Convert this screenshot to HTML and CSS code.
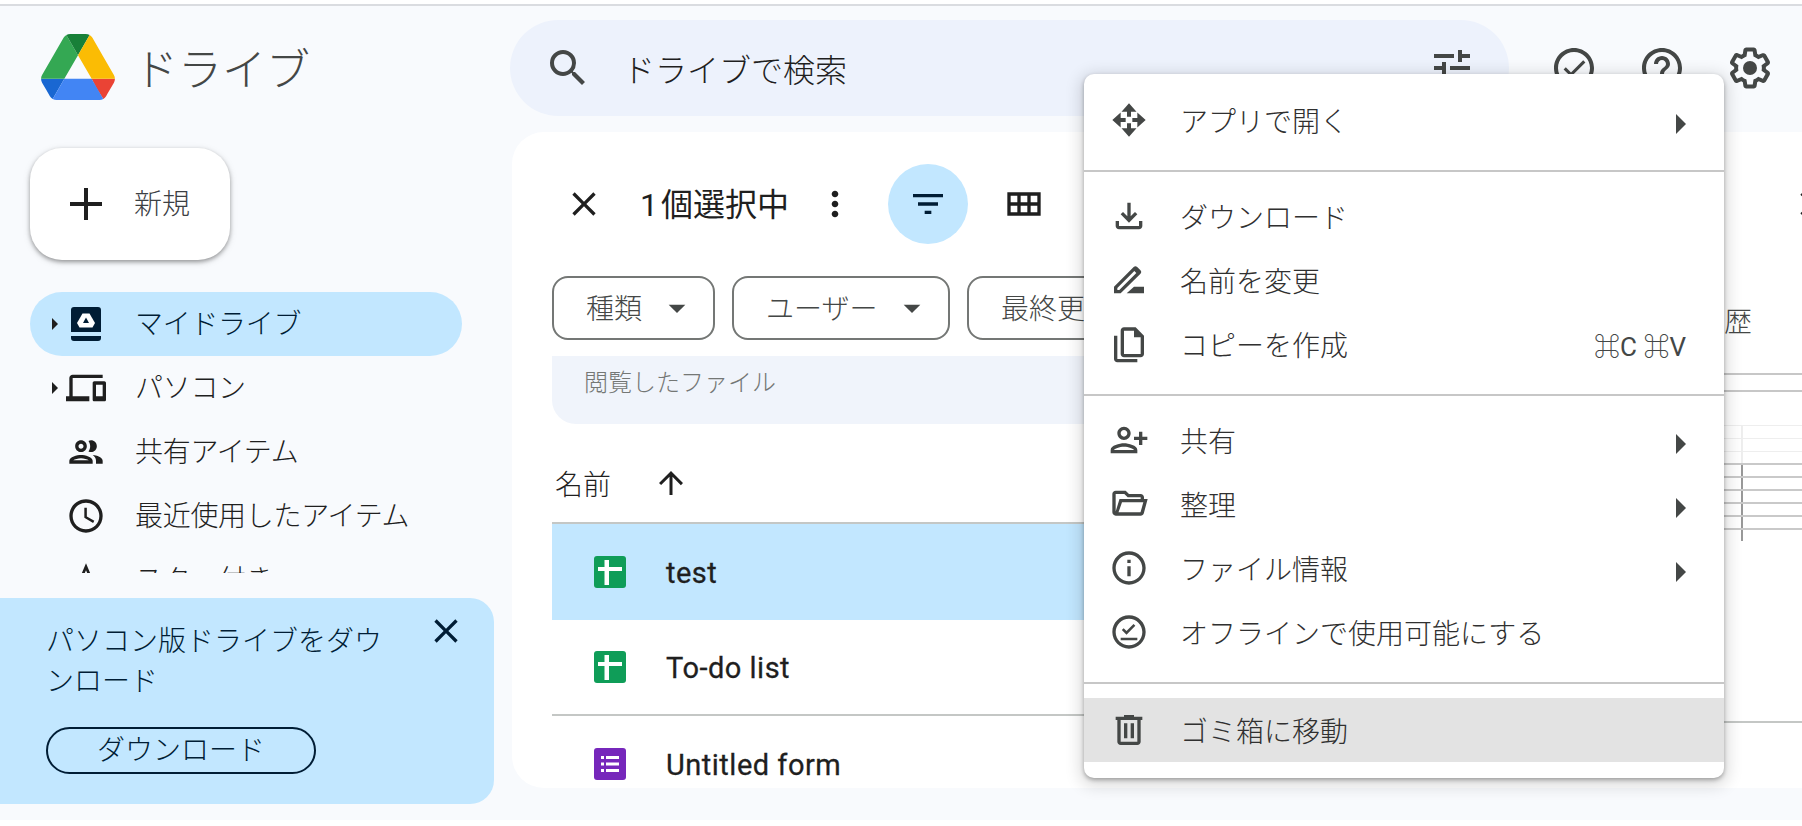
FILE: index.html
```html
<html>
  <head>
    <meta charset="UTF-8" />
    <meta name="viewport" content="width=device-width, initial-scale=1.0" />
    <link rel="stylesheet" href="styles.css">
  </head>
  <body>
    <div class="app">
      <!-- left column -->
      <aside class="sidebar">
        <div class="brand">
          <svg class="logo" viewBox="0 0 87.3 78">
            <path d="m6.6 66.85 3.85 6.65c.8 1.4 1.95 2.5 3.3 3.3l13.75-23.8h-27.5c0 1.55.4 3.1 1.2 4.5z" fill="#1967d2"/>
            <path d="m43.65 25-13.75-23.8c-1.35.8-2.5 1.9-3.3 3.3l-25.4 44a9.06 9.06 0 0 0 -1.2 4.5h27.5z" fill="#34a853"/>
            <path d="m73.55 76.8c1.35-.8 2.5-1.9 3.3-3.3l1.6-2.75 7.65-13.25c.8-1.4 1.2-2.95 1.2-4.5h-27.502l5.852 11.5z" fill="#ea4335"/>
            <path d="m43.65 25 13.75-23.8c-1.35-.8-2.9-1.2-4.5-1.2h-18.5c-1.6 0-3.15.45-4.5 1.2z" fill="#188038"/>
            <path d="m59.8 53h-32.3l-13.75 23.8c1.35.8 2.9 1.2 4.5 1.2h50.8c1.6 0 3.15-.45 4.5-1.2z" fill="#4285f4"/>
            <path d="m73.4 26.5-12.7-22c-.8-1.4-1.95-2.5-3.3-3.3l-13.75 23.8 16.15 28h27.45c0-1.55-.4-3.1-1.2-4.5z" fill="#fbbc04"/>
          </svg>
          <span class="brand-name">ドライブ</span>
        </div>

        <button class="new-btn" type="button">
          <svg class="ic48" viewBox="0 0 24 24"><path d="M20 13h-7v7h-2v-7H4v-2h7V4h2v7h7v2z"/></svg>
          <span>新規</span>
        </button>

        <nav class="nav">
          <div class="nav-item active">
            <span class="caret"></span>
            <svg class="ic40" viewBox="0 0 40 40">
              <path d="M8 3h24a3 3 0 0 1 3 3v22H5V6a3 3 0 0 1 3-3zM5 32h30v2a3 3 0 0 1-3 3H8a3 3 0 0 1-3-3z"/>
              <path d="M16.5 9.5h7l5.5 9.5-2.5 4.5h-13L11 19z" fill="#fff"/>
              <path d="M20 13.5l3 5.5h-6z"/>
            </svg>
            <span class="nav-label">マイドライブ</span>
          </div>
          <div class="nav-item">
            <span class="caret"></span>
            <svg class="ic40" viewBox="0 0 24 24"><path d="M4 6h18V4H4c-1.1 0-2 .9-2 2v11H0v3h14v-3H4V6zm19 2h-6c-.55 0-1 .45-1 1v10c0 .55.45 1 1 1h6c.55 0 1-.45 1-1V9c0-.55-.45-1-1-1zm-1 9h-4v-7h4v7z"/></svg>
            <span class="nav-label">パソコン</span>
          </div>
          <div class="nav-item">
            <span class="caret none"></span>
            <svg class="ic40" viewBox="0 0 24 24"><path d="M9 13.75c-2.34 0-7 1.17-7 3.5V19h14v-1.75c0-2.33-4.66-3.5-7-3.5zM4.34 17c.84-.58 2.87-1.25 4.66-1.25s3.82.67 4.66 1.25H4.34zM9 12c1.93 0 3.5-1.57 3.5-3.5S10.93 5 9 5 5.5 6.57 5.5 8.5 7.07 12 9 12zm0-5c.83 0 1.5.67 1.5 1.5S9.83 10 9 10s-1.5-.67-1.5-1.5S8.17 7 9 7zm7.04 6.81c1.16.84 1.96 1.96 1.96 3.44V19h4v-1.75c0-2.02-3.5-3.17-5.96-3.44zM15 12c1.93 0 3.5-1.57 3.5-3.5S16.93 5 15 5c-.54 0-1.04.13-1.5.35.63.89 1 1.98 1 3.15s-.37 2.26-1 3.15c.46.22.96.35 1.5.35z"/></svg>
            <span class="nav-label">共有アイテム</span>
          </div>
          <div class="nav-item">
            <span class="caret none"></span>
            <svg class="ic40" viewBox="0 0 24 24"><path d="M11.99 2C6.47 2 2 6.48 2 12s4.47 10 9.99 10C17.52 22 22 17.52 22 12S17.52 2 11.99 2zM12 20c-4.42 0-8-3.58-8-8s3.58-8 8-8 8 3.58 8 8-3.58 8-8 8zm.5-13H11v6l5.25 3.15.75-1.23-4.5-2.67z"/></svg>
            <span class="nav-label">最近使用したアイテム</span>
          </div>
          <div class="nav-item">
            <span class="caret none"></span>
            <svg class="ic40" viewBox="0 0 24 24"><path d="M22 9.24l-7.19-.62L12 2 9.19 8.63 2 9.24l5.46 4.73L5.82 21 12 17.27 18.18 21l-1.63-7.03L22 9.24zM12 15.4l-3.76 2.27 1-4.28-3.32-2.88 4.38-.38L12 6.1l1.71 4.04 4.38.38-3.32 2.88 1 4.28L12 15.4z"/></svg>
            <span class="nav-label">スター付き</span>
          </div>
        </nav>

        <div class="promo">
          <div class="promo-top">
            <p class="promo-text">パソコン版ドライブをダウンロード</p>
            <svg class="ic40 promo-close" viewBox="0 0 24 24"><path d="M19 6.41L17.59 5 12 10.59 6.41 5 5 6.41 10.59 12 5 17.59 6.41 19 12 13.41 17.59 19 19 17.59 13.41 12z"/></svg>
          </div>
          <button class="promo-btn" type="button">ダウンロード</button>
        </div>
      </aside>

      <!-- right column -->
      <div class="content">
        <header class="topbar">
          <div class="search">
            <svg class="ic48" viewBox="0 0 24 24"><path d="M15.5 14h-.79l-.28-.27A6.471 6.471 0 0 0 16 9.5 6.5 6.5 0 1 0 9.5 16c1.61 0 3.09-.59 4.23-1.57l.27.28v.79l5 4.99L20.49 19l-4.99-5zm-6 0C7.01 14 5 11.99 5 9.5S7.01 5 9.5 5 14 7.01 14 9.5 11.99 14 9.5 14z"/></svg>
            <span class="search-text">ドライブで検索</span>
            <svg class="ic48" viewBox="0 0 24 24"><path d="M3 17v2h6v-2H3zM3 5v2h10V5H3zm10 16v-2h8v-2h-8v-2h-2v6h2zM7 9v2H3v2h4v2h2V9H7zm14 4v-2H11v2h10zm-6-4h2V7h4V5h-4V3h-2v6z"/></svg>
          </div>
          <div class="top-icons">
            <svg class="ic48" viewBox="0 0 24 24"><path d="M12 2C6.48 2 2 6.48 2 12s4.48 10 10 10 10-4.48 10-10S17.52 2 12 2zm0 18c-4.41 0-8-3.59-8-8s3.59-8 8-8 8 3.59 8 8-3.59 8-8 8zM16.6 8.1l-6.1 6.1-2.6-2.6-1.1 1.1 3.7 3.7 7.2-7.2z"/></svg>
            <svg class="ic48" viewBox="0 0 24 24"><path d="M11 18h2v-2h-2v2zm1-16C6.48 2 2 6.48 2 12s4.48 10 10 10 10-4.48 10-10S17.52 2 12 2zm0 18c-4.41 0-8-3.59-8-8s3.59-8 8-8 8 3.59 8 8-3.59 8-8 8zm0-14c-2.21 0-4 1.79-4 4h2c0-1.1.9-2 2-2s2 .9 2 2c0 2-3 1.75-3 5h2c0-2.25 3-2.5 3-5 0-2.21-1.79-4-4-4z"/></svg>
            <svg class="ic48" viewBox="0 0 24 24"><path d="M13.85 22.25h-3.7c-.74 0-1.36-.54-1.45-1.27l-.27-1.89c-.27-.14-.53-.29-.79-.46l-1.8.72c-.7.26-1.47-.03-1.81-.65L2.2 15.53c-.35-.66-.2-1.44.36-1.88l1.53-1.19c-.01-.15-.02-.3-.02-.46 0-.15.01-.31.02-.46l-1.52-1.19c-.59-.45-.74-1.26-.37-1.88l1.85-3.19c.34-.62 1.11-.9 1.79-.63l1.81.73c.26-.17.52-.32.78-.46l.27-1.91c.09-.7.71-1.25 1.44-1.25h3.7c.74 0 1.36.54 1.45 1.27l.27 1.89c.27.14.53.29.79.46l1.8-.72c.71-.26 1.48.03 1.82.65l1.84 3.18c.36.66.2 1.44-.36 1.88l-1.52 1.19c.01.15.02.3.02.46s-.01.31-.02.46l1.52 1.19c.56.45.72 1.23.37 1.86l-1.86 3.22c-.34.62-1.11.9-1.8.63l-1.8-.72c-.26.17-.52.32-.78.46l-.27 1.91c-.1.68-.72 1.22-1.46 1.22zm-3.23-2h2.76l.37-2.55.53-.22c.44-.18.88-.44 1.34-.78l.45-.34 2.38.96 1.38-2.4-2.03-1.58.07-.56c.03-.26.06-.51.06-.78s-.03-.53-.06-.78l-.07-.56 2.03-1.58-1.39-2.4-2.39.96-.45-.35c-.42-.32-.87-.58-1.33-.77l-.52-.22-.37-2.55h-2.76l-.37 2.55-.53.21c-.44.19-.88.44-1.34.79l-.45.33-2.38-.95-1.39 2.39 2.03 1.58-.07.56a7 7 0 0 0-.06.79c0 .26.02.53.06.78l.07.56-2.03 1.58 1.38 2.4 2.39-.96.45.35c.43.33.86.58 1.33.77l.53.22.38 2.55z"/><circle cx="12" cy="12" r="3.5"/></svg>
          </div>
        </header>

        <main class="panel">
          <section class="files">
            <div class="toolbar">
              <svg class="ic40" viewBox="0 0 24 24"><path d="M19 6.41L17.59 5 12 10.59 6.41 5 5 6.41 10.59 12 5 17.59 6.41 19 12 13.41 17.59 19 19 17.59 13.41 12z"/></svg>
              <span class="count">1 個選択中</span>
              <svg class="ic40 more" viewBox="0 0 24 24"><path d="M12 8c1.1 0 2-.9 2-2s-.9-2-2-2-2 .9-2 2 .9 2 2 2zm0 2c-1.1 0-2 .9-2 2s.9 2 2 2 2-.9 2-2-.9-2-2-2zm0 6c-1.1 0-2 .9-2 2s.9 2 2 2 2-.9 2-2-.9-2-2-2z"/></svg>
              <div class="filter-btn">
                <svg class="ic40" viewBox="0 0 24 24"><path d="M10 18h4v-2h-4v2zM3 6v2h18V6H3zm3 7h12v-2H6v2z"/></svg>
              </div>
              <svg class="ic40 grid-btn" viewBox="0 0 24 24"><path d="M2 5v14h20V5H2zm6 12H4v-4h4v4zm0-6H4V7h4v4zm6 6h-4v-4h4v4zm0-6h-4V7h4v4zm6 6h-4v-4h4v4zm0-6h-4V7h4v4z"/></svg>
            </div>

            <div class="chips">
              <div class="chip chip-type"><span class="chip-label">種類</span><svg class="ic40" viewBox="0 0 24 24"><path d="M7 10l5 5 5-5z"/></svg></div>
              <div class="chip chip-user"><span class="chip-label">ユーザー</span><svg class="ic40" viewBox="0 0 24 24"><path d="M7 10l5 5 5-5z"/></svg></div>
              <div class="chip chip-date"><span class="chip-label">最終更新</span><svg class="ic40" viewBox="0 0 24 24"><path d="M7 10l5 5 5-5z"/></svg></div>
            </div>

            <div class="banner">閲覧したファイル</div>

            <div class="list-head">
              <span>名前</span>
              <svg class="ic36" viewBox="0 0 24 24"><path d="M4 12l1.41 1.41L11 7.83V20h2V7.83l5.58 5.59L20 12l-8-8-8 8z"/></svg>
            </div>

            <div class="file selected">
              <svg class="file-icon" viewBox="0 0 32 32"><rect width="32" height="32" rx="3" fill="#0f9d58"/><path d="M10.5 4H15v7h13v4H15v14h-4.5V15H4v-4h6.5z" fill="#fff"/></svg>
              <span>test</span>
            </div>
            <div class="file ruled">
              <svg class="file-icon" viewBox="0 0 32 32"><rect width="32" height="32" rx="3" fill="#0f9d58"/><path d="M10.5 4H15v7h13v4H15v14h-4.5V15H4v-4h6.5z" fill="#fff"/></svg>
              <span>To-do list</span>
            </div>
            <div class="file">
              <svg class="file-icon" viewBox="0 0 32 32"><rect width="32" height="32" rx="3" fill="#7627bb"/><path d="M7 8h3v3H7zM12 8h13v3H12zM7 14.5h3v3H7zM12 14.5h13v3H12zM7 21h3v3H7zM12 21h13v3H12z" fill="#fff"/></svg>
              <span>Untitled form</span>
            </div>
          </section>

          <!-- details pane, mostly behind the menu -->
          <section class="details">
            <svg class="ic40 details-close" viewBox="0 0 24 24"><path d="M19 6.41L17.59 5 12 10.59 6.41 5 5 6.41 10.59 12 5 17.59 6.41 19 12 13.41 17.59 19 19 17.59 13.41 12z"/></svg>
            <div class="tabs"><span>履歴</span></div>
            <div class="preview-rule"></div>
            <div class="preview">
              <div class="sheet-faint"></div>
              <div class="sheet-dark"></div>
            </div>
            <div class="details-rule"></div>
          </section>
        </main>
      </div>
    </div>

    <div class="menu">
      <div class="menu-item">
        <svg class="ic40" viewBox="0 0 24 24">
          <path d="M12 2l4.5 5h-3.3v3h-2.4V7H7.500z"/>
          <path d="M12 2l4.5 5h-3.3v3h-2.4V7H7.500z" transform="rotate(90 12 12)"/>
          <path d="M12 2l4.5 5h-3.3v3h-2.4V7H7.500z" transform="rotate(180 12 12)"/>
          <path d="M12 2l4.5 5h-3.3v3h-2.4V7H7.500z" transform="rotate(270 12 12)"/>
        </svg>
        <span class="menu-label">アプリで開く</span>
        <i class="sub"></i>
      </div>
      <div class="menu-rule"></div>
      <div class="menu-item">
        <svg class="ic40" viewBox="0 0 24 24"><path d="M18 15v3H6v-3H4v3c0 1.1.9 2 2 2h12c1.1 0 2-.9 2-2v-3h-2zm-1-4l-1.41-1.41L13 12.17V4h-2v8.17L8.41 9.59 7 11l5 5 5-5z"/></svg>
        <span class="menu-label">ダウンロード</span>
      </div>
      <div class="menu-item">
        <svg class="ic40" viewBox="0 0 24 24"><path fill-rule="evenodd" d="M3 20v-4L14.8 4.2a1.5 1.5 0 0 1 2.1 0l2 2a1.5 1.5 0 0 1 0 2.1L7 20zM5 18h1.2L16.4 7.8 15.2 6.6 5 16.8z"/><path d="M10.6 20l4.4-4h6v4z"/></svg>
        <span class="menu-label">名前を変更</span>
      </div>
      <div class="menu-item">
        <svg class="ic40" viewBox="0 0 24 24"><path fill-rule="evenodd" d="M9 2h7l5 5v11c0 1.1-.9 2-2 2H9c-1.1 0-2-.9-2-2V4c0-1.1.9-2 2-2zm0 2v14h10V8h-4V4H9z"/><path d="M3 7h2v14h12v2H5c-1.1 0-2-.9-2-2V7z"/></svg>
        <span class="menu-label">コピーを作成</span>
        <span class="shortcut">⌘C ⌘V</span>
      </div>
      <div class="menu-rule"></div>
      <div class="menu-item">
        <svg class="ic40" viewBox="0 0 24 24"><path transform="matrix(-1 0 0 1 24 0)" d="M15 12c2.21 0 4-1.79 4-4s-1.79-4-4-4-4 1.79-4 4 1.79 4 4 4zm0-6c1.1 0 2 .9 2 2s-.9 2-2 2-2-.9-2-2 .9-2 2-2zm0 8c-2.67 0-8 1.34-8 4v2h16v-2c0-2.66-5.33-4-8-4zm-6 4c.22-.72 3.31-2 6-2 2.7 0 5.8 1.29 6 2H9zm-3-3v-3h3v-2H6V7H4v3H1v2h3v3h2z"/></svg>
        <span class="menu-label">共有</span>
        <i class="sub"></i>
      </div>
      <div class="menu-item">
        <svg class="ic40" viewBox="0 0 24 24"><path fill-rule="evenodd" d="M4 4h6l2 2h7c1.1 0 2 .9 2 2v1h2.2l-2.3 8.5c-.23.87-1.01 1.5-1.93 1.5H4c-1.1 0-2-.9-2-2V6c0-1.1.9-2 2-2zm0 2v10.5L6.3 9H19V8h-7.800l-2-2H4zm3.800 5l-2.100 6h13.200l1.700-6H7.800z"/></svg>
        <span class="menu-label">整理</span>
        <i class="sub"></i>
      </div>
      <div class="menu-item">
        <svg class="ic40" viewBox="0 0 24 24"><path d="M11 7h2v2h-2zm0 4h2v6h-2zm1-9C6.48 2 2 6.48 2 12s4.48 10 10 10 10-4.48 10-10S17.52 2 12 2zm0 18c-4.41 0-8-3.59-8-8s3.59-8 8-8 8 3.59 8 8-3.59 8-8 8z"/></svg>
        <span class="menu-label">ファイル情報</span>
        <i class="sub"></i>
      </div>
      <div class="menu-item">
        <svg class="ic40" viewBox="0 0 24 24"><path d="M12 2C6.48 2 2 6.48 2 12s4.48 10 10 10 10-4.48 10-10S17.52 2 12 2zm0 18c-4.41 0-8-3.59-8-8s3.59-8 8-8 8 3.59 8 8-3.59 8-8 8zM7 15.500h10V17H7zM10.500 13.600L7.700 10.800l1.100-1.100 1.700 1.700 4.200-4.200 1.100 1.100z"/></svg>
        <span class="menu-label">オフラインで使用可能にする</span>
      </div>
      <div class="menu-rule last"></div>
      <div class="menu-item hover">
        <svg class="ic40" viewBox="0 0 24 24"><path d="M15 4V3H9v1H4v2h1v13c0 1.1.9 2 2 2h10c1.1 0 2-.9 2-2V6h1V4h-5zm2 15H7V6h10v13zM9 8h2v9H9zm4 0h2v9h-2z"/></svg>
        <span class="menu-label">ゴミ箱に移動</span>
      </div>
    </div>
  </body>
</html>
```

FILE: styles.css
```css
html,
body {
  margin: 0;
}

body {
  width: 1802px;
  height: 826px;
  overflow: hidden;
  position: relative;
  background-color: #fff;
  color: #1f1f1f;
  font-family: Roboto, "Noto Sans CJK JP", sans-serif;
  font-size: 28px;
  font-weight: 300;
}

svg {
  display: block;
  flex-shrink: 0;
  fill: currentColor;
}

button {
  font: inherit;
  color: inherit;
  cursor: pointer;
}

.ic48 {
  width: 48px;
  height: 48px;
}

.ic40 {
  width: 40px;
  height: 40px;
}

.ic36 {
  width: 36px;
  height: 36px;
}

.app {
  display: flex;
  height: 814px;
  margin-top: 4px;
  background-color: #f8fafd;
  border-top: 2px solid #dadce0;
  overflow: hidden;
}

/* sidebar */
.sidebar {
  width: 510px;
  flex-shrink: 0;
  display: flex;
  flex-direction: column;
}

.brand {
  display: flex;
  align-items: center;
  height: 66px;
  margin: 28px 0 0 41px;
}

.logo {
  width: 74px;
  height: 66px;
}

.brand-name {
  margin-left: 19px;
  font-size: 44px;
  color: #444746;
}

.new-btn {
  display: flex;
  align-items: center;
  width: 200px;
  height: 112px;
  margin: 48px 0 0 30px;
  padding: 0 0 0 32px;
  border: 0;
  border-radius: 32px;
  background-color: #fff;
  box-shadow: 0 2px 4px rgba(0, 0, 0, 0.35), 0 2px 8px rgba(0, 0, 0, 0.1);
  color: #1f1f1f;
}

.new-btn span {
  margin-left: 24px;
  padding-bottom: 4px;
  color: #3c4043;
}

.nav {
  height: 281px;
  margin: 32px 0 0 30px;
  overflow: hidden;
}

.nav-item {
  display: flex;
  align-items: center;
  width: 432px;
  height: 64px;
  border-radius: 32px;
}

.nav-item.active {
  background-color: #c2e7ff;
  color: #001d35;
}

.caret {
  width: 0;
  height: 0;
  margin: 0 8px 0 22px;
  border-left: 6px solid #1f1f1f;
  border-top: 6px solid transparent;
  border-bottom: 6px solid transparent;
}

.caret.none {
  border-left-color: transparent;
}

.nav-label {
  margin-left: 29px;
  padding-bottom: 4px;
  letter-spacing: -0.3px;
}

.promo {
  width: 494px;
  height: 206px;
  box-sizing: border-box;
  margin-top: 25px;
  padding: 20px 0 0 46px;
  background-color: #c2e7ff;
  border-radius: 0 24px 24px 0;
  color: #001d35;
}

.promo-top {
  display: flex;
  align-items: flex-start;
  height: 109px;
}

.promo-text {
  width: 340px;
  margin: 0;
  padding-top: 4px;
  line-height: 40px;
}

.promo-close {
  margin: -7px 0 0 40px;
}

.promo-btn {
  display: block;
  width: 270px;
  height: 47px;
  padding: 0;
  border: 2px solid #001d35;
  border-radius: 24px;
  background: transparent;
  color: #001d35;
  line-height: 40px;
}

/* top bar */
.content {
  flex: 1;
  min-width: 0;
  display: flex;
  flex-direction: column;
}

.topbar {
  display: flex;
  align-items: center;
  height: 96px;
  padding: 14px 0 16px;
  color: #444746;
}

.search {
  display: flex;
  align-items: center;
  width: 999px;
  height: 96px;
  box-sizing: border-box;
  padding: 0 33px 0 34px;
  border-radius: 48px;
  background-color: #edf2fc;
}

.search-text {
  margin-left: 31px;
  flex: 1;
  font-size: 32px;
  color: #1f1f1f;
}

.top-icons {
  display: flex;
  gap: 40px;
  margin-left: 41px;
}

/* main panel */
.panel {
  flex: 1;
  display: flex;
  min-height: 0;
  margin: 0 0 32px 2px;
  overflow: hidden;
  background-color: #fff;
  border-radius: 32px 0 0 32px;
}

.files {
  width: 948px;
  flex-shrink: 0;
  padding-left: 40px;
}

.toolbar {
  display: flex;
  align-items: center;
  height: 80px;
  padding: 32px 0 0 12px;
}

.count {
  margin-left: 36px;
  padding-bottom: 4px;
  font-size: 32px;
  font-weight: 400;
  word-spacing: -5px;
  white-space: nowrap;
}

.more {
  margin-left: 26px;
}

.filter-btn {
  display: flex;
  align-items: center;
  justify-content: center;
  width: 80px;
  height: 80px;
  margin-left: 33px;
  border-radius: 50%;
  background-color: #c2e7ff;
  color: #001d35;
}

.grid-btn {
  margin-left: 36px;
}

.chips {
  display: flex;
  gap: 17px;
  margin-top: 32px;
}

.chip {
  display: flex;
  align-items: center;
  height: 64px;
  box-sizing: border-box;
  padding-left: 32px;
  border: 2px solid #747775;
  border-radius: 16px;
  color: #444746;
  white-space: nowrap;
}

.chip-label {
  padding-bottom: 2px;
}

.chip svg {
  margin-left: 15px;
}

.chip-type {
  width: 163px;
}

.chip-user {
  width: 218px;
}

.chip-date {
  width: 240px;
}

.banner {
  height: 68px;
  box-sizing: border-box;
  margin-top: 16px;
  padding: 9px 0 0 32px;
  border-radius: 0 0 24px 24px;
  background-color: #f0f4fb;
  font-size: 24px;
  line-height: 36px;
  color: #747775;
}

.list-head {
  display: flex;
  align-items: center;
  height: 98px;
  box-sizing: border-box;
  padding: 20px 0 0 3px;
}

.list-head svg {
  margin-left: 42px;
}

.file {
  display: flex;
  align-items: center;
  height: 96px;
  box-sizing: border-box;
  padding-left: 42px;
  font-size: 29px;
  font-weight: 400;
  letter-spacing: 0.5px;
  -webkit-text-stroke: 0.3px #1f1f1f;
  color: #1f1f1f;
}

.file span {
  padding-top: 2px;
}

.file.selected {
  height: 98px;
  border-top: 2px solid #c4c7c5;
  background-color: #c2e7ff;
}

.file.ruled {
  border-bottom: 2px solid #c4c7c5;
}

.file-icon {
  width: 32px;
  height: 32px;
  margin-right: 40px;
}

/* details pane */
.details {
  flex: 1;
  min-width: 0;
  overflow: hidden;
  padding-top: 52px;
}

.details-close {
  margin-left: 292px;
}

.tabs {
  height: 70px;
  margin-top: 79px;
  padding-left: 196px;
  line-height: 40px;
  border-bottom: 2px solid #c7c7c7;
  color: #444746;
}

.preview-rule {
  height: 2px;
  margin-top: 15px;
  background-color: #c7c7c7;
}

.preview {
  margin-top: 33px;
  filter: blur(0.5px);
}

.sheet-faint {
  height: 38px;
  background-image: linear-gradient(#eee 1px, transparent 1px), linear-gradient(90deg, transparent 241px, #eee 241px, #eee 243px, transparent 243px);
  background-size: 100% 13px, 100% 100%;
}

.sheet-dark {
  height: 78px;
  background-image: linear-gradient(#c9c9c9 2px, transparent 2px), linear-gradient(90deg, transparent 241px, #999 241px, #999 243px, transparent 243px);
  background-size: 100% 13px, 100% 100%;
}

.details-rule {
  height: 2px;
  margin-top: 180px;
  background-color: #c4c7c5;
}

/* context menu */
.menu {
  position: absolute;
  left: 1084px;
  top: 74px;
  width: 640px;
  height: 704px;
  box-sizing: border-box;
  padding-top: 14px;
  border-radius: 10px;
  background-color: #fff;
  box-shadow: 0 2px 4px rgba(0, 0, 0, 0.3), 0 4px 16px 4px rgba(0, 0, 0, 0.14);
  color: #444746;
}

.menu-item {
  display: flex;
  align-items: center;
  height: 64px;
  padding: 0 38px 0 25px;
}

.menu-label {
  margin-left: 31px;
  flex: 1;
  color: #303030;
}

.menu-item.hover {
  background-color: #e3e3e3;
}

.menu-rule {
  height: 2px;
  margin: 18px 0 12px;
  background-color: #c7c7c7;
}

.menu-rule.last {
  margin-bottom: 14px;
}

.sub {
  width: 0;
  height: 0;
  margin-top: 8px;
  border-left: 10px solid #444746;
  border-top: 10px solid transparent;
  border-bottom: 10px solid transparent;
}

.shortcut {
  font-size: 26px;
  font-weight: 400;
  color: #444746;
}
```
